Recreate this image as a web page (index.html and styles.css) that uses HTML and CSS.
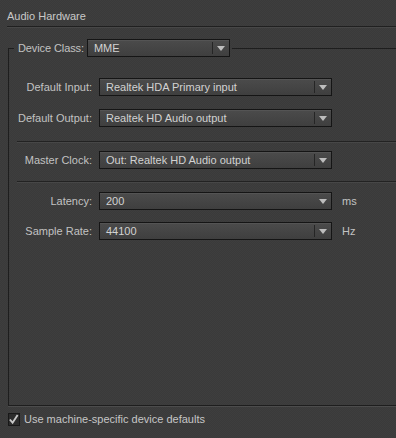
FILE: index.html
```html
<!DOCTYPE html>
<html lang="en">
<head>
    <meta charset="UTF-8">
    <title>Audio Hardware</title>
    <link rel="stylesheet" href="styles.css">
</head>
<body>

    <div class="header">Audio Hardware</div>

    <fieldset class="group">
        <legend class="legend">
            <span class="legend-label">Device Class:</span>
            <div class="select select-small">
                <span class="select-text">MME</span>
                <span class="select-btn"><i class="arrow"></i></span>
            </div>
        </legend>

        <div class="row first">
            <label>Default Input:</label>
            <div class="select">
                <span class="select-text">Realtek HDA Primary input</span>
                <span class="select-btn"><i class="arrow"></i></span>
            </div>
        </div>
        <div class="row">
            <label>Default Output:</label>
            <div class="select">
                <span class="select-text">Realtek HD Audio output</span>
                <span class="select-btn"><i class="arrow"></i></span>
            </div>
        </div>

        <div class="sep"></div>

        <div class="row after-sep">
            <label>Master Clock:</label>
            <div class="select">
                <span class="select-text">Out: Realtek HD Audio output</span>
                <span class="select-btn"><i class="arrow"></i></span>
            </div>
        </div>

        <div class="sep sep2"></div>

        <div class="row after-sep2">
            <label>Latency:</label>
            <div class="select">
                <span class="select-text">200</span>
                <span class="select-btn no-line"><i class="arrow"></i></span>
            </div>
            <span class="unit">ms</span>
        </div>
        <div class="row row-tight">
            <label>Sample Rate:</label>
            <div class="select">
                <span class="select-text">44100</span>
                <span class="select-btn"><i class="arrow"></i></span>
            </div>
            <span class="unit">Hz</span>
        </div>
    </fieldset>

    <div class="check-row">
        <span class="checkbox">
            <svg width="12" height="13" viewBox="0 0 12 13">
                <polyline points="2,6.5 5,10 10.5,1.5" fill="none" stroke="#c9c9c9" stroke-width="2"/>
            </svg>
        </span>
        <span class="check-label">Use machine-specific device defaults</span>
    </div>

</body>
</html>
```

FILE: styles.css
```css
* {
    padding: 0;
    margin: 0;
    box-sizing: border-box;
}

body {
    width: 396px;
    height: 438px;
    overflow: hidden;
    background-color: #3c3c3c;
    background-image: repeating-conic-gradient(#3a3a3a 0 25%, #3e3e3e 0 50%);
    background-size: 2px 2px;
    font-family: "Liberation Sans", Arial, sans-serif;
    font-size: 11px;
    color: #c2c2c2;
}

.header {
    margin-left: 7px;
    height: 27px;
    padding-top: 10px;
    line-height: 13px;
    color: #c8c8c8;
    border-bottom: 1px solid #202020;
    box-shadow: 0 1px 0 #474747;
}

.group {
    margin: 12px 0 0 8px;
    height: 367px;
    padding: 0 0 0 5px;
    border: 1px solid #1e1e1e;
    border-right: none;
    box-shadow: 0 1px 0 #4c4c4c;
}

.legend {
    display: flex;
    align-items: center;
    gap: 3px;
    padding: 0 2px 0 4px;
}

.legend-label {
    line-height: 13px;
    letter-spacing: -0.1px;
}

.row {
    display: flex;
    align-items: center;
    height: 18px;
    margin-top: 13px;
}

.row.first {
    margin-top: 21px;
}

.row.after-sep {
    margin-top: 9px;
}

.row.after-sep2 {
    margin-top: 10px;
}

.row.row-tight {
    margin-top: 12px;
}

.row label {
    width: 78px;
    text-align: right;
    margin-right: 7px;
    line-height: 13px;
}

.select {
    display: flex;
    width: 233px;
    height: 18px;
    border: 1px solid #151515;
    background: linear-gradient(#4b4b4b, #3f3f3f);
    box-shadow: inset 0 1px 0 #545454;
}

.select-small {
    width: 143px;
}

.select-text {
    flex: 1;
    padding-left: 6px;
    line-height: 16px;
    color: #d2d2d2;
    white-space: nowrap;
}

.select-btn {
    width: 17px;
    display: flex;
    align-items: center;
    justify-content: center;
    margin: 2px 0;
    border-left: 1px solid #252525;
}

.select-btn.no-line {
    border-left-color: transparent;
}

.arrow {
    width: 0;
    height: 0;
    border-left: 4px solid transparent;
    border-right: 4px solid transparent;
    border-top: 5px solid #bdbdbd;
}

.unit {
    margin-left: 10px;
    line-height: 13px;
}

.sep {
    margin: 14px 0 0 3px;
    height: 1px;
    background: #222;
    box-shadow: 0 1px 0 #474747;
}

.sep2 {
    margin-top: 12px;
}

.check-row {
    display: flex;
    align-items: center;
    margin: 7px 0 0 8px;
    gap: 4px;
}

.checkbox {
    width: 12px;
    height: 13px;
    border: 1px solid #181818;
    background: #2c2c2c;
    display: flex;
}

.checkbox svg {
    margin: -1px 0 0 -1px;
}

.check-label {
    line-height: 13px;
    color: #c6c6c6;
}
```
